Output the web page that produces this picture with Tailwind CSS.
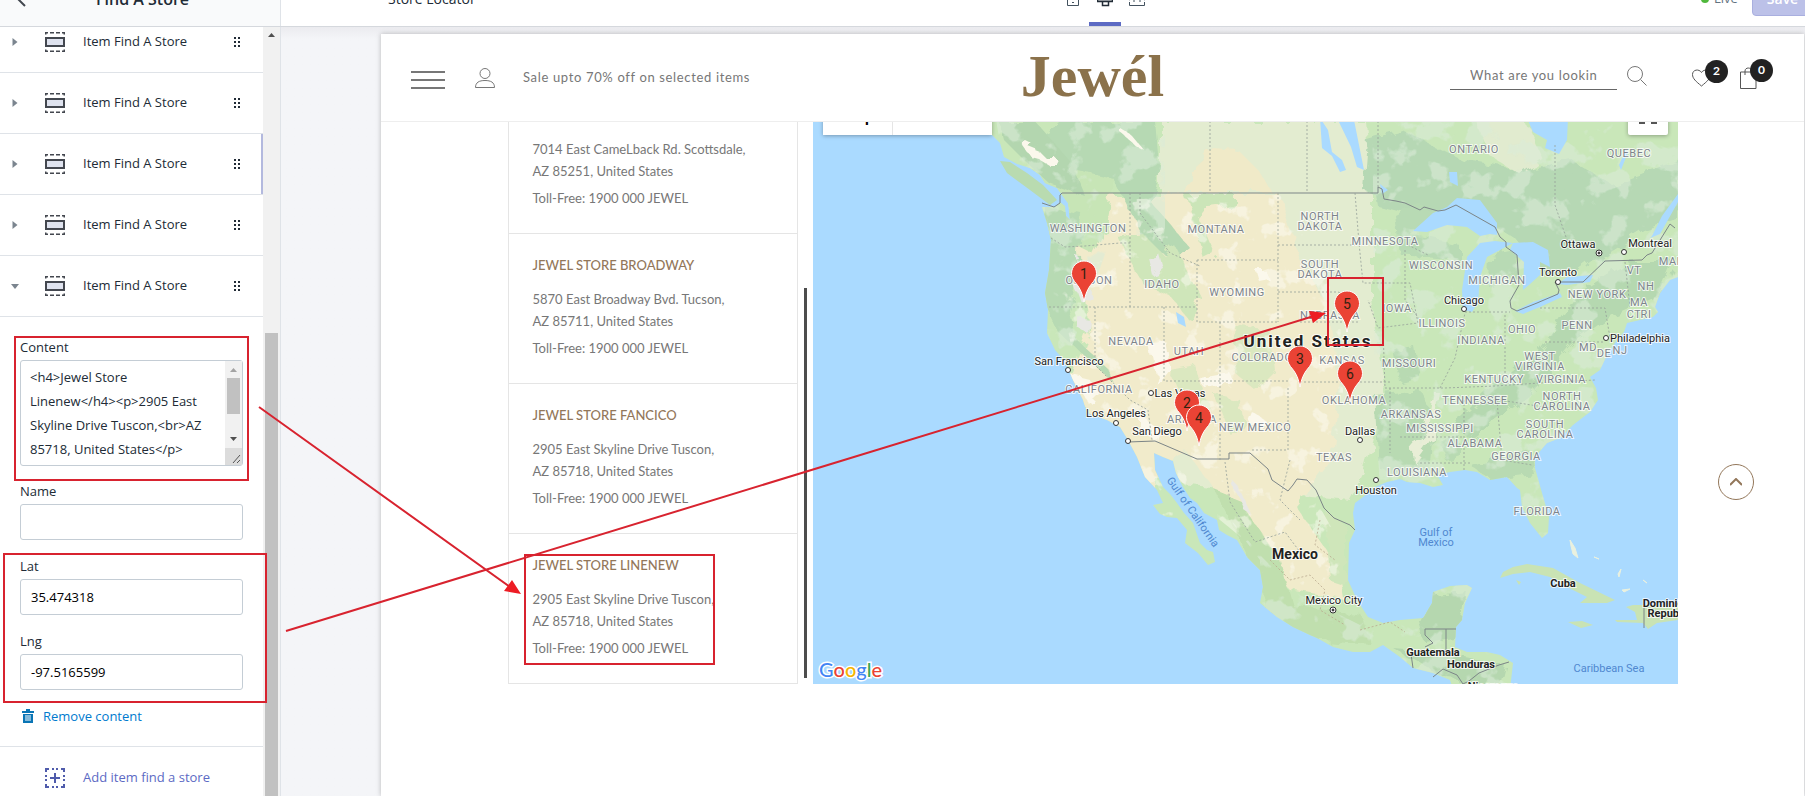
<!DOCTYPE html>
<html lang="en">
<head>
<meta charset="utf-8">
<title>Store Locator</title>
<script src="https://cdn.jsdelivr.net/npm/@tailwindcss/browser@4"></script>
</head>
<body class="relative flex h-screen flex-col overflow-hidden bg-[#f4f5f8] font-['Open_Sans',sans-serif] text-[13px] text-[#212b36]">
<svg class="hidden" aria-hidden="true">
  <symbol id="section" viewBox="0 0 20 20">
    <path d="M0 2.500V0h3v1.500H1.500v1zM5 0h4v1.500H5zM11 0h4v1.500h-4zM17 0h3v2.500h-1.500v-1H17zM0 17.500V20h3v-1.500H1.500v-1zM5 18.500h4V20H5zM11 18.500h4V20h-4zM17 20h3v-2.500h-1.500v1H17z" fill="#43474f"/>
    <path d="M1 6h18v8H1z" fill="#dfe3ef" stroke="#43474f" stroke-width="2"/>
  </symbol>
  <symbol id="grip" viewBox="0 0 6 10"><path d="M0 0h2v2H0zM4 0h2v2H4zM0 4h2v2H0zM4 4h2v2H4zM0 8h2v2H0zM4 8h2v2H4z" fill="#212b36"/></symbol>
  <symbol id="right" viewBox="0 0 5 8"><path d="M0 0l5 4-5 4z" fill="#7b858f"/></symbol>
  <symbol id="down" viewBox="0 0 8 5"><path d="M0 0h8L4 5z" fill="#7b858f"/></symbol>
  <symbol id="pin" viewBox="0 0 28 44" overflow="visible"><path d="M14 1C7 1 1.500 6.500 1.500 13.500c0 4 2 7 5 10.500 4 5 6 10 7.500 18 1.500-8 3.500-13 7.500-18 3-3.500 5-6.500 5-10.500C26.500 6.500 21 1 14 1z" fill="#ea4335" stroke="#fff" stroke-width="1"/></symbol>
</svg>

<header class="-mt-[29px] flex h-14 shrink-0 border-b border-[#d5d8dd] bg-white">
  <div class="flex w-[281px] items-center border-r border-[#dfe3e8] bg-[#f9fafb]">
    <button aria-label="Back" class="ml-3 p-1"><svg class="h-4 w-4" viewBox="0 0 16 16" fill="none" stroke="#43474f" stroke-width="2"><path d="M10 0L2 8l7 7"/></svg></button>
    <h1 class="ml-[60px] text-base leading-5 font-semibold">Find A Store</h1>
  </div>
  <div class="flex min-w-0 flex-1 items-center">
    <span class="flex-1 pl-[107px] text-sm">Store Locator</span>
    <div class="flex self-stretch pl-4">
      <button aria-label="Mobile" class="flex w-8 items-center justify-center"><svg class="h-4 w-4" viewBox="0 0 16 16" fill="none" stroke="#43525f" stroke-width="1"><path d="M2.500 0v14.500h11V0M7 11.500h2"/></svg></button>
      <button aria-label="Desktop" class="flex w-8 items-center justify-center border-b-4 border-[#5c6ac4] pt-1"><svg class="h-4 w-4" viewBox="0 0 16 16" fill="none" stroke="#212b36" stroke-width="1"><path d="M.5.5h15v10H.5zM5.500 11v3.500h6V11M1 8.500h14" stroke-width="1.500"/></svg></button>
      <button aria-label="Full width" class="flex w-8 items-center justify-center"><svg class="h-4 w-4" viewBox="0 0 16 16" fill="none" stroke="#43525f" stroke-width="1"><path d="M.5 11v3.500h15V11M.5 9l3-2M15.500 9l-3-2M4 10h2M10 10h2"/></svg></button>
    </div>
    <div class="flex flex-1 items-center justify-end gap-1 overflow-hidden text-[#637381]">
      <span class="h-2 w-2 rounded-full bg-[#50b83c]"></span><span class="ml-px w-[34px]">Live</span>
      <button class="-mr-4 h-[34px] w-[69px] shrink-0 rounded border border-[#a9afdf] bg-[#bcc1e8] pr-2 text-center text-sm font-semibold text-white">Save</button>
    </div>
  </div>
</header>

<div class="flex min-h-0 flex-1">
  <aside class="flex w-[281px] shrink-0 overflow-hidden border-r border-[#dfe3e8] bg-white">
    <div class="-mt-[15px] min-w-0 flex-1">
      <ul>
        <li class="flex h-[61px] items-center border-b border-[#dfe3e8] pl-3"><svg class="h-2 w-[6px]"><use href="#right"/></svg><svg class="ml-[27px] h-5 w-5"><use href="#section"/></svg><span class="ml-[18px] flex-1">Item Find A Store</span><svg class="mr-[23px] h-[10px] w-[6px]"><use href="#grip"/></svg></li>
        <li class="flex h-[61px] items-center border-b border-[#dfe3e8] pl-3"><svg class="h-2 w-[6px]"><use href="#right"/></svg><svg class="ml-[27px] h-5 w-5"><use href="#section"/></svg><span class="ml-[18px] flex-1">Item Find A Store</span><svg class="mr-[23px] h-[10px] w-[6px]"><use href="#grip"/></svg></li>
        <li class="relative flex h-[61px] items-center border-b border-[#dfe3e8] pl-3 after:absolute after:inset-y-0 after:right-0 after:w-[2px] after:bg-[#b3b9de]"><svg class="h-2 w-[6px]"><use href="#right"/></svg><svg class="ml-[27px] h-5 w-5"><use href="#section"/></svg><span class="ml-[18px] flex-1">Item Find A Store</span><svg class="mr-[23px] h-[10px] w-[6px]"><use href="#grip"/></svg></li>
        <li class="flex h-[61px] items-center border-b border-[#dfe3e8] pl-3"><svg class="h-2 w-[6px]"><use href="#right"/></svg><svg class="ml-[27px] h-5 w-5"><use href="#section"/></svg><span class="ml-[18px] flex-1">Item Find A Store</span><svg class="mr-[23px] h-[10px] w-[6px]"><use href="#grip"/></svg></li>
        <li class="flex h-[61px] items-center border-b border-[#dfe3e8] pl-[11px]"><svg class="h-[5px] w-2"><use href="#down"/></svg><svg class="ml-[26px] h-5 w-5"><use href="#section"/></svg><span class="ml-[18px] flex-1">Item Find A Store</span><svg class="mr-[23px] h-[10px] w-[6px]"><use href="#grip"/></svg></li>
      </ul>
      <form class="h-[430px] border-b border-[#dfe3e8] px-5 pt-5">
        <label for="content" class="block leading-5">Content</label>
        <div class="relative mt-[3px] mb-[15px] h-[106px]">
          <textarea id="content" class="h-full w-full resize-none overflow-hidden rounded-[3px] border border-[#c4cdd5] py-1 pr-4 pl-[9px] leading-6 whitespace-pre">&lt;h4&gt;Jewel Store
Linenew&lt;/h4&gt;&lt;p&gt;2905 East
Skyline Drive Tuscon,&lt;br&gt;AZ
85718, United States&lt;/p&gt;</textarea>
          <div class="absolute inset-y-px right-px flex w-[17px] flex-col items-center bg-[#f1f1f1]">
            <svg class="mt-[7px] h-1 w-[7px]" viewBox="0 0 7 4"><path d="M0 4h7L3.500 0z" fill="#a3a3a3"/></svg>
            <span class="mt-[6px] h-9 w-[13px] bg-[#c1c1c1]"></span>
            <svg class="mt-[23px] h-1 w-[7px]" viewBox="0 0 7 4"><path d="M0 0h7L3.500 4z" fill="#505050"/></svg>
            <svg class="mt-auto h-[17px] w-[17px] bg-[#dcdcdc]" viewBox="0 0 17 17"><path d="M8 15l7-8M12 15l3-3" stroke="#555"/></svg>
          </div>
        </div>
        <label for="name" class="block leading-5">Name</label>
        <input id="name" class="mt-[3px] mb-4 block h-9 w-full rounded-[3px] border border-[#c4cdd5] px-[10px]">
        <label for="lat" class="block leading-5">Lat</label>
        <input id="lat" value="35.474318" class="mt-[3px] mb-4 block h-9 w-full rounded-[3px] border border-[#c4cdd5] px-[10px] text-black">
        <label for="lng" class="block leading-5">Lng</label>
        <input id="lng" value="-97.5165599" class="mt-[3px] mb-4 block h-9 w-full rounded-[3px] border border-[#c4cdd5] px-[10px] text-black">
        <button type="button" class="flex items-center gap-[9px] pl-[2px] leading-5 text-[#007ace]">
          <svg class="h-[14px] w-3" viewBox="0 0 12 14" fill="#0a75b5"><path d="M0 2h4V0h4v2h4v2H0zM1 5h10v9H1z"/><path d="M4 6v6M6 6v6M8 6v6" stroke="#fff"/></svg>Remove content
        </button>
      </form>
      <button class="flex h-[61px] items-center gap-[18px] pl-[45px] text-[#5c6ac4]">
        <svg class="h-5 w-5" viewBox="0 0 20 20" fill="none" stroke="#4f5bab" stroke-width="2"><path d="M1 4V1h3M7 1h2M11 1h2M16 1h3v3M19 7v2M19 11v2M19 16v3h-3M13 19h-2M9 19H7M4 19H1v-3M1 13v-2M1 9V7M10 5v10M5 10h10"/></svg>Add item find a store
      </button>
    </div>
    <div class="flex w-[17px] flex-col items-center bg-[#f1f1f1]">
      <svg class="mt-[6px] h-1 w-[7px]" viewBox="0 0 7 4"><path d="M0 4h7L3.500 0z" fill="#505050"/></svg>
      <span class="mt-[296px] w-[13px] flex-1 bg-[#c1c1c1]"></span>
    </div>
  </aside>

  <main class="min-w-0 flex-1 overflow-hidden bg-gradient-to-b from-[#ebebef] to-[#f4f5f8] to-[12px] pt-[7px] pr-px pl-[100px] font-['Lato',sans-serif] text-[#777]">
    <div class="relative h-full bg-white shadow-[0_0_5px_rgba(0,0,0,0.25)]">
      <div class="relative z-10 grid h-[88px] grid-cols-[1fr_auto_1fr] items-center border-b border-[#eee] bg-white">
        <div class="flex items-center pl-[30px]">
          <button aria-label="Menu" class="mt-1 flex w-[34px] flex-col gap-[6px]"><span class="h-[2px] bg-[#777]"></span><span class="h-[2px] bg-[#777]"></span><span class="h-[2px] bg-[#777]"></span></button>
          <button aria-label="Account" class="ml-[30px]"><svg class="h-5 w-5" viewBox="0 0 20 20" fill="none" stroke="#777"><circle cx="10" cy="5.500" r="5"/><path d="M.5 19.500c0-5 3.500-7 9.500-7s9.500 2 9.500 7z"/></svg></button>
          <p class="ml-7 text-[13px] tracking-wider">Sale upto 70% off on selected items</p>
        </div>
        <a href="#" class="pb-1 font-['Liberation_Serif',serif] text-[60px] leading-[80px] font-bold text-[#8b724b]">Jewél</a>
        <div class="flex items-center justify-end pr-[47px]">
          <input aria-label="Search" placeholder="What are you lookin" class="w-[167px] border-b border-[#666] px-5 pb-1 text-[13px] leading-5 tracking-wider placeholder:text-[#777]">
          <button aria-label="Search" class="ml-[10px]"><svg class="mb-1 h-5 w-5" viewBox="0 0 20 20" fill="none" stroke="#777"><circle cx="8" cy="8" r="7.500"/><path d="M13.500 13.500l6 6"/></svg></button>
          <button aria-label="Wishlist" class="relative ml-[45px]"><svg class="h-[18px] w-5" viewBox="0 0 20 18" fill="none" stroke="#555"><path d="M9.500 17C4 12.500.5 9.500.5 5.500c0-5 6.500-6 9-2 2.500-4 9-3 9 2 0 4-3.500 7-9 11.500z"/></svg><span class="absolute -top-[9px] left-[13px] flex h-[23px] w-[23px] items-center justify-center rounded-full bg-[#222] text-xs font-bold text-white">2</span></button>
          <button aria-label="Cart" class="relative ml-7"><svg class="h-[22px] w-[17px]" viewBox="0 0 17 22" fill="none" stroke="#555"><path d="M.5 5h15.500v16.500H.5zM5 8V4c0-4 6.500-4 6.500 0v4"/></svg><span class="absolute -top-2 left-[10px] flex h-[23px] w-[23px] items-center justify-center rounded-full bg-[#222] text-xs font-bold text-white">0</span></button>
        </div>
      </div>

      <div class="mx-auto -mt-[38px] flex h-[600px] max-w-[1170px]">
        <div class="w-[290px] shrink-0 border border-t-0 border-[#e5e5e5] text-[13px] leading-[22px]">
          <section class="h-[150px] border-b border-[#e5e5e5] pt-5 pl-6 whitespace-nowrap"><h4 class="font-medium text-[#93775a]">JEWEL STORE CAMELBACK</h4><p class="mt-3">7014 East CameLback Rd. Scottsdale,<br>AZ 85251, United States</p><p class="mt-[5px]">Toll-Free: 1900 000 JEWEL</p></section>
          <section class="h-[150px] border-b border-[#e5e5e5] pt-5 pl-6 whitespace-nowrap"><h4 class="font-medium text-[#93775a]">JEWEL STORE BROADWAY</h4><p class="mt-3">5870 East Broadway Bvd. Tucson,<br>AZ 85711, United States</p><p class="mt-[5px]">Toll-Free: 1900 000 JEWEL</p></section>
          <section class="h-[150px] border-b border-[#e5e5e5] pt-5 pl-6 whitespace-nowrap"><h4 class="font-medium text-[#93775a]">JEWEL STORE FANCICO</h4><p class="mt-3">2905 East Skyline Drive Tuscon,<br>AZ 85718, United States</p><p class="mt-[5px]">Toll-Free: 1900 000 JEWEL</p></section>
          <section class="h-[149px] pt-5 pl-6 whitespace-nowrap"><h4 class="font-medium text-[#93775a]">JEWEL STORE LINENEW</h4><p class="mt-3">2905 East Skyline Drive Tuscon,<br>AZ 85718, United States</p><p class="mt-[5px]">Toll-Free: 1900 000 JEWEL</p></section>
        </div>
        <div class="flex w-[15px] shrink-0 items-end justify-center pb-[6px]"><span class="h-[390px] w-[3px] bg-[#4d4d4d]"></span></div>
        <div class="relative min-w-0 flex-1 overflow-hidden bg-[#aadaff] font-['Roboto',sans-serif]">
          <svg class="h-full w-full" viewBox="813 84 865 600" preserveAspectRatio="xMidYMid slice" role="img" aria-label="Map of store locations">
            <defs>
              <clipPath id="land"><path id="coast" d="M975 84L992 135 1000 143 1004 157 1017 164 1030 168 1040 175 1045 183 1057 188 1062 195 1068 203 1070 220 1066 216 1065 206 1060 202 1055 207 1042 207 1047 223 1051 240 1049 270 1045 293 1048 310 1047 333 1055 350 1065 361 1073 380 1083 400 1087 413 1107 420 1120 427 1128 440 1137 457 1145 477 1157 490 1163 503 1153 505 1160 514 1167 517 1177 518 1187 530 1185 543 1198 553 1208 565 1215 562 1213 552 1207 550 1200 543 1193 523 1184 513 1177 503 1170 494 1163 487 1155 470 1154 453 1163 457 1173 461 1176 473 1183 487 1190 498 1197 503 1204 513 1217 520 1219 530 1227 535 1237 540 1247 557 1260 570 1263 587 1260 603 1277 617 1293 627 1310 635 1317 638 1333 647 1353 652 1370 652 1383 645 1400 657 1413 668 1433 673 1450 680 1453 690 1510 690 1513 663 1500 655 1487 652 1467 652 1455 647 1456 627 1462 620 1465 603 1472 588 1467 585 1450 586 1433 592 1432 603 1423 618 1400 620 1383 623 1368 617 1357 600 1348 580 1349 543 1355 530 1353 513 1355 503 1363 497 1375 487 1387 482 1400 479 1407 482 1420 483 1433 487 1443 485 1437 475 1450 472 1465 470 1477 472 1490 480 1507 477 1517 488 1520 490 1522 507 1530 523 1542 538 1548 533 1549 517 1542 493 1535 468 1535 457 1547 443 1560 438 1573 425 1590 412 1598 400 1596 388 1590 377 1600 370 1608 353 1617 340 1624 332 1627 323 1653 317 1658 312 1655 307 1660 293 1670 280 1678 277V84z"/></clipPath>
              <filter id="soft"><feTurbulence type="fractalNoise" baseFrequency=".07" numOctaves="3" seed="4"/><feDisplacementMap in="SourceGraphic" scale="14"/></filter>
              <filter id="woods"><feTurbulence type="fractalNoise" baseFrequency=".035" numOctaves="4" seed="11"/><feColorMatrix values="0 0 0 0 .70  0 0 0 0 .84  0 0 0 0 .69  12 0 0 0 -6.600"/><feComposite operator="in" in2="SourceGraphic"/></filter>
              <filter id="sand"><feTurbulence type="fractalNoise" baseFrequency=".045" numOctaves="4" seed="23"/><feColorMatrix values="0 0 0 0 .98  0 0 0 0 .97  0 0 0 0 .90  12 0 0 0 -7.300"/><feComposite operator="in" in2="SourceGraphic"/></filter>
            </defs>
            <use href="#coast" fill="#c9e7b9"/>
            <g clip-path="url(#land)">
              <g filter="url(#soft)">
                <path d="M1160 121H1365L1372 193V300L1385 400 1365 470 1350 500 1150 480 1160 193z" fill="#e3ecd0"/>
                <path d="M1095 195H1280L1300 260 1325 300 1340 380 1330 460 1295 505 1340 570 1345 600 1290 590 1262 565 1215 490 1185 450 1140 500 1200 560 1212 570 1140 520 1100 430 1070 380 1090 330 1078 240z" fill="#f1ebcb"/>
                <path d="M1185 193l10-25 20-18 25 2 20 20 12 21z" fill="#f0eac8"/>
                <path d="M1015 140l80-5 20 35-10 60-12 25-20-10-10 20 5-60-30-15z" fill="#c7e5b6"/>
                <path d="M1060 121h95l5 55-10 25 26 30 12 15-15 12-25-10-20-40-15-30-45-10-35-20z" fill="#b6d9b3"/>
                <path d="M1000 121h35l35 40 15 35-35-12-30-28-15-15z" fill="#b3d6af"/>
                <path d="M1045 207l38 8-4 55-10 40 8 30 30 28 8 16-30-28-28-25-17-35z" fill="#b7dab3"/>
                <path d="M1120 240l25-4 20 20 10-10 25 50-10 25-20-25-25-10-15-25z" fill="#cfe6ba"/>
                <path d="M1185 195l50 0 0 10-25 3-10 12 15 35-10 5z" fill="#cbe5b8"/>
                <path d="M1235 325l35 5 5 40-20 20-18-15zM1170 370l25-5 15 45-20 5zM1215 395l25 5 5 30-15 5z" fill="#dbe8c0"/>
                <path d="M1367 140l35-10 60 30 60 10 50-10 40 25 66-25v50l-80 50-35-15-50-15-50-35-60 10-40-15z" fill="#b6d8b4"/>
                <path d="M1367 150l60 0 60 20 80 0 50 30 60-15v35l-60 20-40 30-30 5-30-35-40-25-40 5-60-15z" fill="#b6d8b4"/>
                <path d="M1473 115h50l20 45-22 15-30-18z" fill="#e1ebcf"/>
                <path d="M1395 215l20-10 30 8-35 22 50 10 0 15-60-5zM1490 255l25-5 2 25-28 12z" fill="#b8dab4"/>
                <path d="M1580 290l50-30 45 0-15 35-55 25-35 25-40 50-60 45-15-15 40-40 45-35z" fill="#b5d8b0"/>
                <path d="M1375 395l45-5 15 30-5 55-50-5zM1395 350l20-3 5 30-20 5zM1440 440l20-5 0 20-15 5zM1470 465l60-15 5 25-45 5z" fill="#b8dab2"/>
                <path d="M1215 490l25 10 40 60 12 45 70 10 10 30-60-5-45-30-15-45z" fill="#c0dfae"/>
                <path d="M1433 595l35-3-8 45-35 5-5-20zM1395 650l60 5 50 10-5 20-50-5z" fill="#b5d7af"/>
                <path d="M1325 510l20 15 0 60-15-5z" fill="#cfe6ba"/>
                <path d="M1412 440l15-12 8-35 5 0-8 45-18 25z" fill="#e8eed6"/>
              </g>
              <path filter="url(#woods)" opacity=".6" d="M990 84H1165V230L1110 240 1060 380 1040 380zM1372 84H1680V480H1550V540H1520L1380 490 1375 400zM1215 500l45 60 0 60 190 75 70 0 0-120-100 0-60 50-60-30-40-40z"/>
              <path filter="url(#sand)" opacity=".5" d="M1100 200L1280 195 1340 300 1345 450 1310 490 1350 560 1330 610 1220 520 1150 450 1190 560 1090 420 1060 300z"/>
              <g filter="url(#soft)" fill="#fbf8ec">
                <path d="M1070 375l20 5 10 15-10 10zM1150 345l15-5 5 30-12 15zM1200 378l30-5 5 10-30 5zM1140 415l20 15-5 10-15-10zM1250 410l15 10-5 8-15-6zM1255 270l10 0 3 8-10 2z"/>
                <path d="M1022 138l8 4 0 6 10 4 6 6 10 0 2 8-8 0-10-6-8-2-10-14zM1122 130l10 6 10 12-8-4-12-10z"/>
              </g>
              <path d="M1078 258l14 4-4 10-12-4zM1148 257l12-2 4 14-12 6zM1074 285l16 4 6 14-16-2zM1078 318l12 2-2 14-10-6zM1232 480l8 8 14 30-10-8z" fill="#e8e8e4" filter="url(#soft)"/>
              <g fill="#aadaff">
                <path d="M1413 231L1433 213 1447 207 1457 198 1480 200 1497 223V235L1490 234 1480 236 1467 227 1447 225 1427 232zM1463 310L1462 290 1467 257 1480 243 1495 241 1513 243 1500 250 1487 257 1480 277 1478 303 1472 312zM1513 243L1533 242 1548 250 1550 267 1540 262 1540 275 1530 284 1523 290 1524 262 1510 250zM1515 311L1533 302 1560 293 1562 297 1540 307 1523 314zM1558 284L1567 277 1593 275 1590 282 1567 285z"/>
                <path d="M1320 118l8 12 4 22 10 8 4 10-6 2-8-16-10-8zM1338 120h16l4 20 6 30-7-3-6-20zM1449 172l8 0 1 14-8-4zM1527 118l6 14 14 8-2 8 14 6 8-14 1-22zM1652 236l10-20 16-22v8l-18 32-10 4zM1619 165l7-15 2 2-7 18zM1176 312l8 5 2 10-8-4zM1380 184l8 6-6 4z"/>
              </g>
            </g>
            <path d="M1000 161l10 1 17 11 16 12 14 15-7 5-20-15-23-17z" fill="#b9dbb0"/>
            <path d="M1500 578l3-6 10-5 14-3 26 4 27 15 35 17-8 3-27 0 7-6-20-10-17-10-20-5-17 2zM1633 605l45 0v15l-21 3-9 6-5-6-26-1-2-2 22 0-2-8-9-5zM1568 622l14-1 11 4-12 3zM1516 580l5 2-2 3z" fill="#c9e3b4"/>
            <path d="M1570 540l5 8 3 10-5-4-2-8zM1618 574l3-5-2 8zM1622 590l8-1-6 3zM1643 580l4 3zM1594 557l5 2z" fill="#eaf1df" stroke="#eaf1df"/>
            <g fill="none" stroke="#7c8587" stroke-width="1">
              <path d="M1042 203l12 4 6-4 0-8 2-2H1378V187l4 2 2 10 12 2 9 2 15 7 4-3 14 4 7-1 11-5 39 22 5 10 6 5v5l11 8 2 30-9 16 1 7 6 3 20-8 21-9 1-4-4-8h28l22-21 37-1 5-5 5-2 18-29 5 4"/>
              <path d="M1128 442l27-1 42 18h32v-6h21l18 16 4 11 16 11 5-6 4-6 10 1 9 10 8 18 10 10 16 7 5 5M1425 629h31M1446 629v22M1425 629v6l8 8-8 4M1413 668l-2-14M1433 677l10-8 14 6 6 9M1463 684l6-3 10-8 20-8 10-3M1644 606v22"/>
              <g stroke="#96a09a" stroke-opacity=".8" stroke-dasharray="2 2">
                <path d="M1210 121v72M1307 121v72M1378 121v66M1555 145v60l12 35M1051 238l14 9 20-1 35-3 10 0M1130 193v114M1140 193l0 20 30 40 30 13M1049 307h148M1095 307v58l35 35 18 10 4 30M1164 307v74h126M1197 260v62h81M1197 260h81M1278 193v129M1278 245h77M1278 292h60l20 8M1220 322v138M1300 322h60M1288 388v62h-38M1300 342v40h90M1355 193l4 50 4 40h47l8 40-40 5-10-28M1383 328l2 60h60M1390 388v65M1445 388l50-2 60-4 40-2M1464 400v70M1400 437h64M1505 315v60M1497 400l5 60 30 5M1420 463h50M1540 308h65l5 30M1545 342h60M1440 388l15-30 10-45M1465 312h45M1408 245l20 10M1500 400l50 8M1225 462l5 40 25 40 30-10 15 20M1405 250l0 50 15 20M1625 262l5 45M1290 460l-10 40 20 20"/>
                <path d="M1270 560l20 20 20-5 15 15-5 20 25 15M1320 520l-5 25 20 15M1360 630l30-8 15 10" stroke="#b9a98e"/>
              </g>
            </g>
            <g fill="#7d848b" stroke="#fff" stroke-opacity=".75" stroke-width="2" paint-order="stroke" text-anchor="middle" class="text-[11px] tracking-wider">
              <text x="1088" y="232">WASHINGTON</text><text x="1216" y="233">MONTANA</text><text x="1320" y="220">NORTH</text><text x="1320" y="230">DAKOTA</text><text x="1320" y="268">SOUTH</text><text x="1320" y="278">DAKOTA</text><text x="1089" y="284">OREGON</text><text x="1162" y="288">IDAHO</text><text x="1237" y="296">WYOMING</text><text x="1330" y="319">NEBRASKA</text><text x="1131" y="345">NEVADA</text><text x="1189" y="355">UTAH</text><text x="1262" y="361">COLORADO</text><text x="1099" y="393">CALIFORNIA</text><text x="1192" y="423">ARIZONA</text><text x="1255" y="431">NEW MEXICO</text><text x="1342" y="364">KANSAS</text><text x="1409" y="367">MISSOURI</text><text x="1354" y="404">OKLAHOMA</text><text x="1411" y="418">ARKANSAS</text><text x="1440" y="432">MISSISSIPPI</text><text x="1475" y="447">ALABAMA</text><text x="1516" y="460">GEORGIA</text><text x="1417" y="476">LOUISIANA</text><text x="1334" y="461">TEXAS</text><text x="1475" y="404">TENNESSEE</text><text x="1494" y="383">KENTUCKY</text><text x="1561" y="383">VIRGINIA</text><text x="1540" y="360">WEST</text><text x="1540" y="370">VIRGINIA</text><text x="1562" y="400">NORTH</text><text x="1562" y="410">CAROLINA</text><text x="1545" y="428">SOUTH</text><text x="1545" y="438">CAROLINA</text><text x="1537" y="515">FLORIDA</text><text x="1481" y="344">INDIANA</text><text x="1522" y="333">OHIO</text><text x="1442" y="327">ILLINOIS</text><text x="1397" y="312">IOWA</text><text x="1577" y="329">PENN</text><text x="1597" y="298">NEW YORK</text><text x="1588" y="351">MD</text><text x="1604" y="357">DE</text><text x="1620" y="354">NJ</text><text x="1634" y="318">CT</text><text x="1646" y="318">RI</text><text x="1639" y="306">MA</text><text x="1646" y="290">NH</text><text x="1634" y="274">VT</text><text x="1677" y="265">MAINE</text><text x="1474" y="153">ONTARIO</text><text x="1629" y="157">QUEBEC</text><text x="1385" y="245">MINNESOTA</text><text x="1441" y="269">WISCONSIN</text><text x="1497" y="284">MICHIGAN</text>
            </g>
            <g fill="#222" stroke="#fff" stroke-opacity=".8" stroke-width="2" paint-order="stroke" text-anchor="middle" class="text-[11px]">
              <text x="1069" y="365">San Francisco</text><text x="1180" y="397">Las Vegas</text><text x="1116" y="417">Los Angeles</text><text x="1157" y="435">San Diego</text><text x="1464" y="304">Chicago</text><text x="1558" y="276">Toronto</text><text x="1578" y="248">Ottawa</text><text x="1650" y="247">Montreal</text><text x="1640" y="342">Philadelphia</text><text x="1360" y="435">Dallas</text><text x="1376" y="494">Houston</text><text x="1334" y="604">Mexico City</text>
              <g class="font-bold"><text x="1308" y="347" class="text-[17px] tracking-[2px]">United States</text><text x="1295" y="559" class="text-[14px]">Mexico</text><text x="1563" y="587">Cuba</text><text x="1433" y="656">Guatemala</text><text x="1471" y="668">Honduras</text><text x="1493" y="690">Nicaragua</text><text x="1669" y="607">Dominican</text><text x="1669" y="617">Republic</text></g>
            </g>
            <g fill="#fff" stroke="#333" stroke-width="1"><circle cx="1068" cy="370" r="2.500"/><circle cx="1151" cy="393" r="2.500"/><circle cx="1116" cy="423" r="2.500"/><circle cx="1128" cy="441" r="2.500"/><circle cx="1464" cy="309" r="2.500"/><circle cx="1558" cy="282" r="2.500"/><circle cx="1624" cy="252" r="2.500"/><circle cx="1606" cy="338" r="2.500"/><circle cx="1360" cy="440" r="2.500"/><circle cx="1376" cy="480" r="2.500"/><circle cx="1599" cy="253" r="3"/><circle cx="1333" cy="610" r="3"/><circle cx="1599" cy="253" r="1" fill="#333"/><circle cx="1333" cy="610" r="1" fill="#333"/></g>
            <g fill="#5088d0" text-anchor="middle" class="text-[11px]"><text x="1436" y="536">Gulf of</text><text x="1436" y="546">Mexico</text><text x="1609" y="672">Caribbean Sea</text><text transform="translate(1190 514) rotate(55)">Gulf of California</text></g>
            <g text-anchor="middle" fill="#321" class="text-[14px]">
              <use href="#pin" x="1070" y="260" width="28" height="44"/><text x="1084" y="279">1</text>
              <use href="#pin" x="1286" y="345" width="28" height="44"/><text x="1300" y="364">3</text>
              <use href="#pin" x="1333" y="290" width="28" height="44"/><text x="1347" y="309">5</text>
              <use href="#pin" x="1336" y="360" width="28" height="44"/><text x="1350" y="379">6</text>
              <use href="#pin" x="1173" y="389" width="28" height="44"/><text x="1187" y="408">2</text>
              <use href="#pin" x="1185" y="404" width="28" height="44"/><text x="1199" y="423">4</text>
            </g>
            <text x="819" y="677" stroke="#fff" stroke-width="3" paint-order="stroke" class="font-['Lato'] text-[20px] font-medium"><tspan fill="#4285f4">G</tspan><tspan fill="#ea4335">o</tspan><tspan fill="#f4b400">o</tspan><tspan fill="#4285f4">g</tspan><tspan fill="#34a853">l</tspan><tspan fill="#ea4335">e</tspan></text>
          </svg>
          <div class="absolute top-[11px] left-[10px] flex h-10 bg-white text-lg text-black shadow-[0_1px_4px_rgba(0,0,0,0.3)]"><button class="w-[70px] border-r border-[#e5e5e5] font-medium">Map</button><button class="w-[99px] text-[#565656]">Satellite</button></div>
          <button aria-label="Full screen" class="absolute top-[11px] right-[10px] flex h-10 w-10 items-center justify-center rounded-[2px] bg-white shadow-[0_1px_4px_rgba(0,0,0,0.3)]"><svg class="h-[18px] w-[18px]" viewBox="0 0 18 18" fill="none" stroke="#555" stroke-width="2"><path d="M1 6V1h5M12 1h5v5M17 12v5h-5M6 17H1v-5"/></svg></button>
        </div>
      </div>
      <button aria-label="Back to top" class="absolute top-[430px] right-[50px] flex h-9 w-9 items-center justify-center rounded-full border border-[#93775a] bg-white"><svg class="h-2 w-3" viewBox="0 0 12 8" fill="none" stroke="#93775a" stroke-width="2"><path d="M0 7l6-6 6 6"/></svg></button>
    </div>
  </main>
</div>

<!-- Guide overlay linking the fields to the store card and its pin -->
<svg class="pointer-events-none absolute inset-0 z-20 h-full w-full" fill="none" stroke="#d8232f" stroke-width="2" aria-hidden="true">
  <path d="M15 337h233v143H15zM4 554h262v148H4zM525 555h189v109H525zM1328 278h55v67h-55z"/>
  <path d="M259 407L510 587M286 631L1314 316"/>
  <path d="M521 594L504 591 512 580zM1326 313L1313 323 1309 311z" fill="#ed1c24" stroke="none"/>
</svg>
</body>
</html>
